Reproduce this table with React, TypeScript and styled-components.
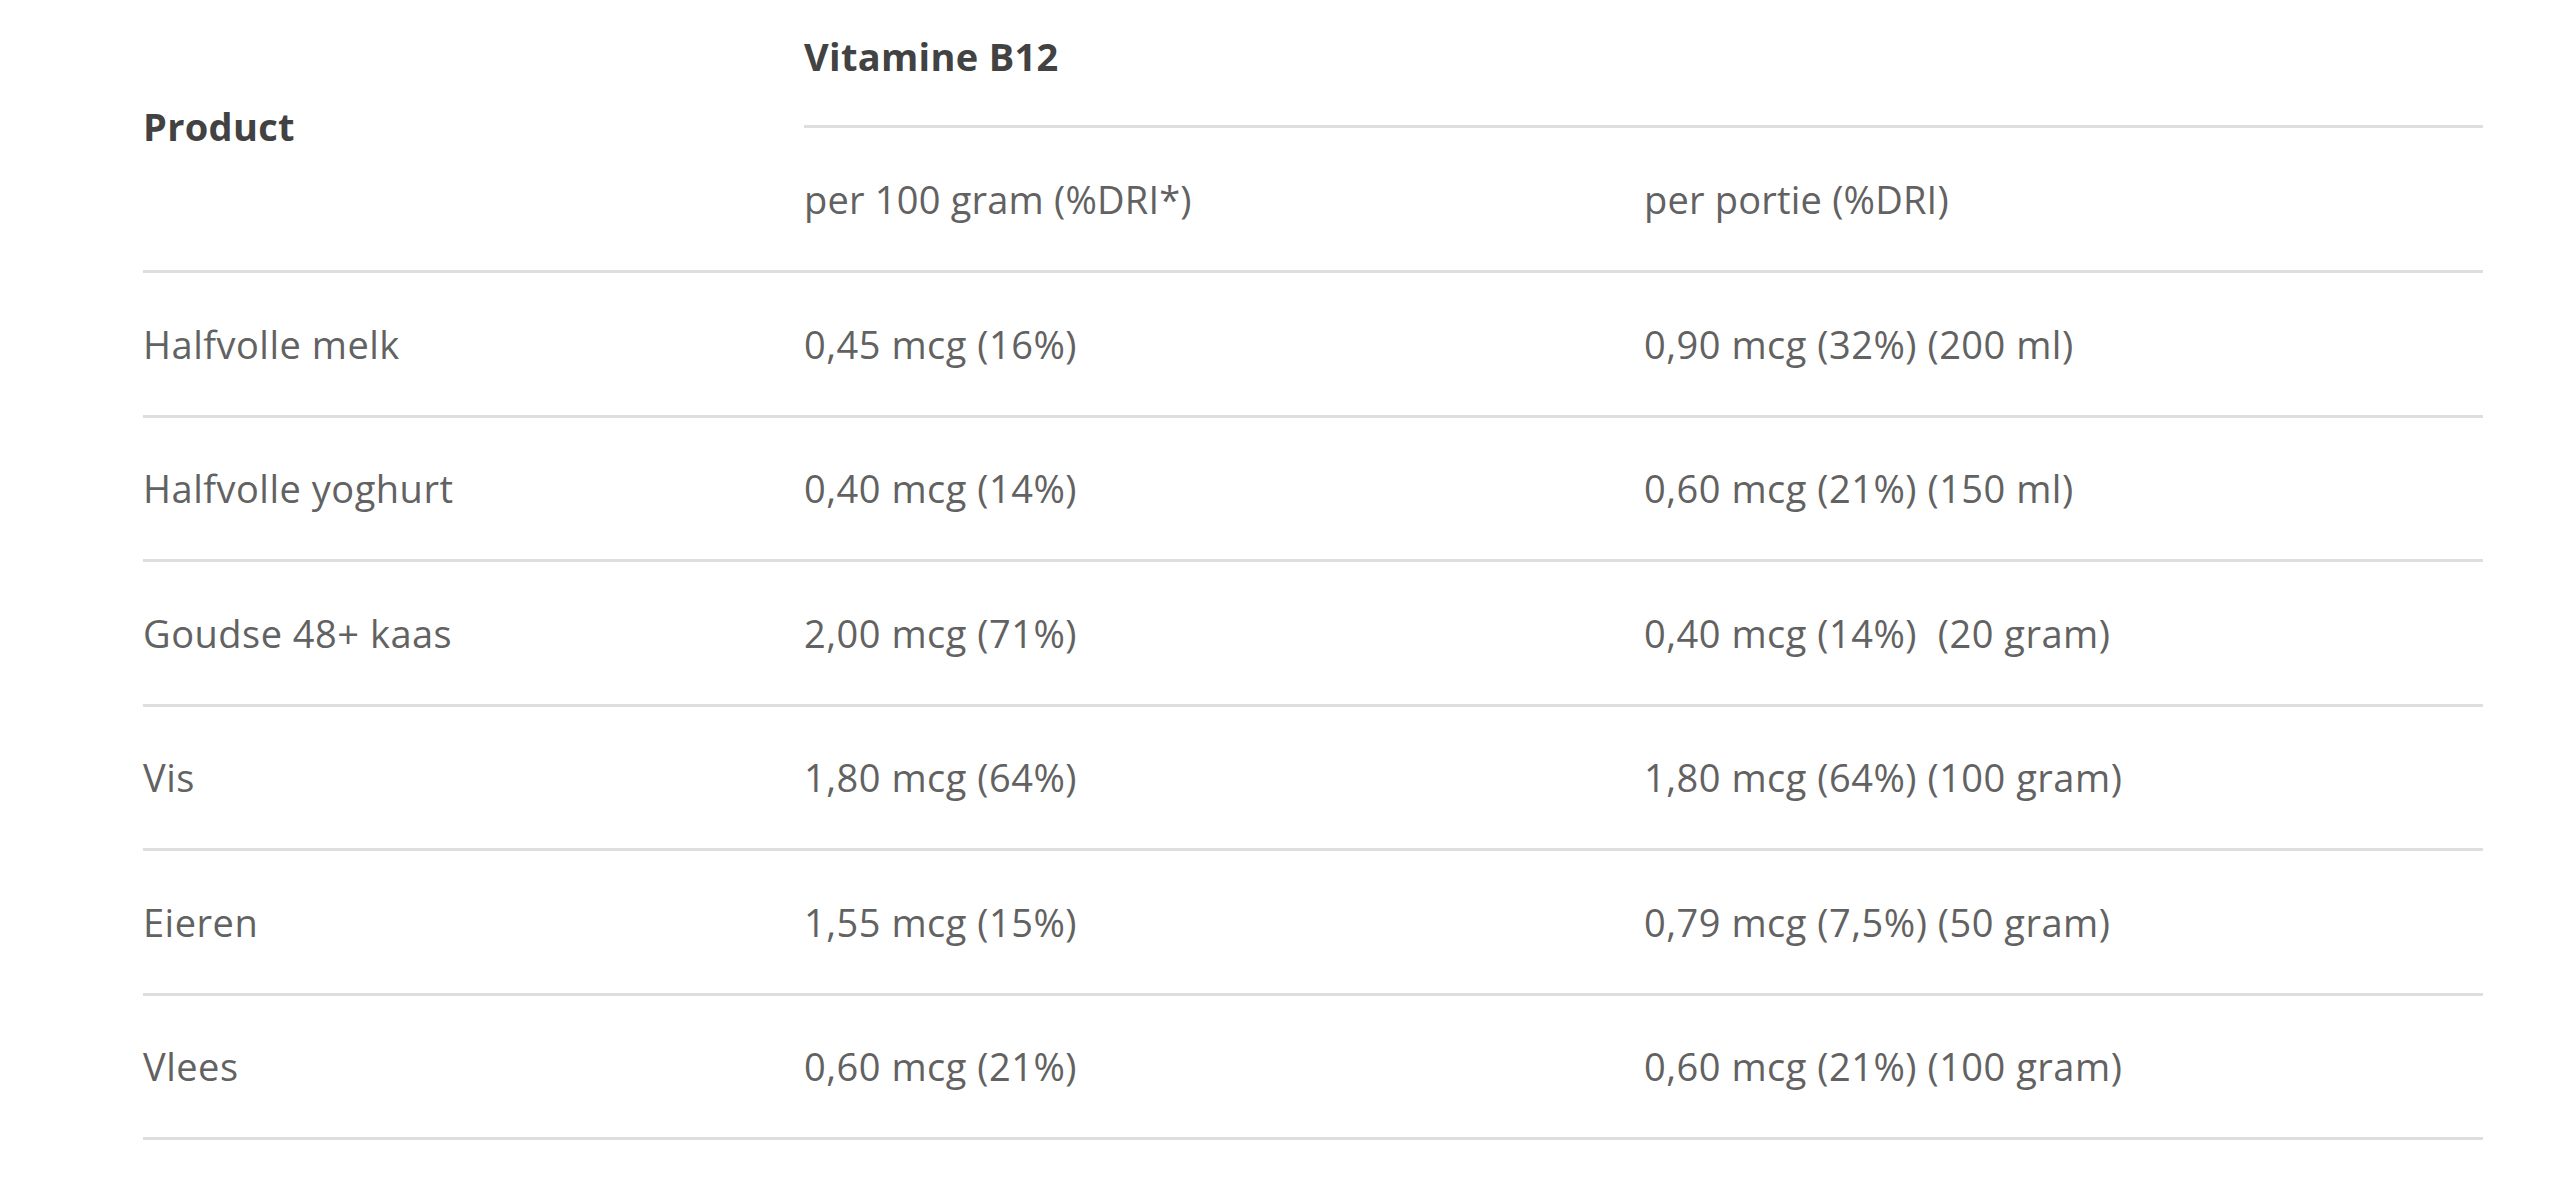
import styled, { createGlobalStyle, css } from "styled-components";

const GlobalStyle = createGlobalStyle`
    html, body {
        margin: 0;
        padding: 0;
        background: #ffffff;
    }
    body {
        font-family: "Open Sans", "Noto Sans", Arial, sans-serif;
        color: #626262;
    }
`;

const Page = styled.div`
    padding: 0 77px 0 143px;
`;

const columns = css`
    display: grid;
    grid-template-columns: 661px 840px 1fr;
`;

const Head = styled.div`
    ${columns};
    grid-template-rows: 128px 145px;
`;

const ProductHead = styled.div`
    grid-row: 1 / 3;
    padding-top: 100px;
    border-bottom: 3px solid #dedede;
    font-size: 38px;
    font-weight: 700;
    letter-spacing: 0.3px;
    color: #424242;
`;

const GroupHead = styled.div`
    grid-column: 2 / 4;
    display: flex;
    align-items: flex-start;
    padding-top: 30px;
    border-bottom: 3px solid #dedede;
    font-size: 38px;
    font-weight: 700;
    letter-spacing: 0.3px;
    color: #424242;
`;

const SubHead = styled.div`
    display: flex;
    align-items: center;
    border-bottom: 3px solid #dedede;
    font-size: 38px;
    letter-spacing: 0.2px;
    color: #626262;
`;

const Row = styled.div`
    ${columns};
    height: 144.5px;
    box-sizing: border-box;
    align-items: center;
    border-bottom: 3px solid #dedede;
`;

const Cell = styled.div`
    font-size: 38px;
    letter-spacing: 0.5px;
    color: #626262;
    white-space: pre;
`;

const rows = [
    ["Halfvolle melk", "0,45 mcg (16%)", "0,90 mcg (32%) (200 ml)"],
    ["Halfvolle yoghurt", "0,40 mcg (14%)", "0,60 mcg (21%) (150 ml)"],
    ["Goudse 48+ kaas", "2,00 mcg (71%)", "0,40 mcg (14%)  (20 gram)"],
    ["Vis", "1,80 mcg (64%)", "1,80 mcg (64%) (100 gram)"],
    ["Eieren", "1,55 mcg (15%)", "0,79 mcg (7,5%) (50 gram)"],
    ["Vlees", "0,60 mcg (21%)", "0,60 mcg (21%) (100 gram)"]
];

function App() {
    return (
        <>
            <GlobalStyle />
            <Page>
                <Head>
                    <ProductHead>Product</ProductHead>
                    <GroupHead>Vitamine B12</GroupHead>
                    <SubHead>per 100 gram (%DRI*)</SubHead>
                    <SubHead>per portie (%DRI)</SubHead>
                </Head>
                {rows.map(([product, per100, portion]) =>
                    <Row key={product}>
                        <Cell>{product}</Cell>
                        <Cell>{per100}</Cell>
                        <Cell>{portion}</Cell>
                    </Row>
                )}
            </Page>
        </>
    );
};

export default App;
